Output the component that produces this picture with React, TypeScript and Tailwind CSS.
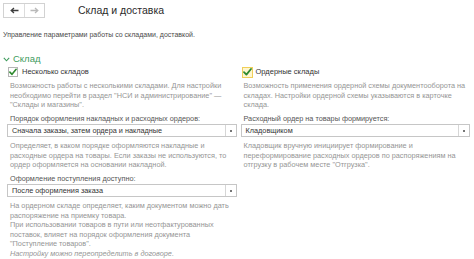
import React from "react";

const Check = () => (
  <svg width="9" height="8" viewBox="0 0 9 8">
    <path d="M1 4.2 L3.4 6.6 L8 1" fill="none" stroke="#2f8a2f" strokeWidth="1.8" strokeLinecap="round" strokeLinejoin="round" />
  </svg>
);

const Select = ({ value }: { value: string }) => (
  <div className="flex h-[13px] items-stretch border border-[#c6c6c6] bg-white">
    <div className="flex flex-1 items-center pl-[4px] text-[7.3px] text-[#333]">{value}</div>
    <div className="flex w-[11px] items-center justify-center border-l border-[#d6d6d6]">
      <div className="h-[2px] w-[2px] bg-[#777]" />
    </div>
  </div>
);

export default function App() {
  return (
    <div className="h-[259px] w-[474px] overflow-hidden bg-white font-['Liberation_Sans',Arial,sans-serif] leading-[9.5px] antialiased">
      <div className="flex items-center pl-[3px] pt-[3px]">
        <div className="flex h-[15px] w-[42px] border border-[#d2d2d2] bg-white">
          <div className="flex w-[21px] items-center justify-center border-r border-[#dcdcdc]">
            <svg width="9" height="7" viewBox="0 0 9 7"><path d="M8.5 3.5 H1.5 M4 1 L1.2 3.5 L4 6" fill="none" stroke="#3c3c3c" strokeWidth="1.3" /></svg>
          </div>
          <div className="flex flex-1 items-center justify-center">
            <svg width="9" height="7" viewBox="0 0 9 7"><path d="M0.5 3.5 H7.5 M5 1 L7.8 3.5 L5 6" fill="none" stroke="#b9b9b9" strokeWidth="1.3" /></svg>
          </div>
        </div>
        <div className="ml-[33px] text-[10.5px] leading-[15px] text-[#2b2b2b]">Склад и доставка</div>
      </div>

      <div className="mt-[12px] pl-[3px] text-[7px] leading-[9px] text-[#4a4a4a]">
        Управление параметрами работы со складами, доставкой.
      </div>

      <div className="mt-[14px] flex items-center pl-[3px] text-[9.5px] leading-[12px] text-[#3e9b5c]">
        <svg width="7" height="5" viewBox="0 0 7 5" className="mr-[3px]"><path d="M0.8 0.8 L3.5 3.8 L6.2 0.8" fill="none" stroke="#3e9b5c" strokeWidth="1.1" /></svg>
        Склад
      </div>

      <div className="mt-[1px] flex gap-[4px] pl-[7px] pr-[4px]">
        {/* left column */}
        <div className="flex w-[230px] flex-col">
          <div className="flex h-[12px] items-center pl-[1px]">
            <div className="flex h-[10px] w-[10px] items-center justify-center border border-[#b5b5b5] bg-white">
              <Check />
            </div>
            <div className="ml-[4px] text-[7.5px] text-[#333]">Несколько складов</div>
          </div>
          <div className="mt-[3px] pl-[3px] text-[7.3px] text-[#959595]">
            Возможность работы с несколькими складами. Для настройки
            <br />
            необходимо перейти в раздел "НСИ и администрирование" —
            <br />
            "Склады и магазины".
          </div>
          <div className="mt-[4px] pl-[3px] text-[7.3px] text-[#555]">
            Порядок оформления накладных и расходных ордеров:
          </div>
          <div className="mt-[1px]">
            <Select value="Сначала заказы, затем ордера и накладные" />
          </div>
          <div className="mt-[4px] pl-[3px] text-[7.3px] text-[#959595]">
            Определяет, в каком порядке оформляются накладные и
            <br />
            расходные ордера на товары. Если заказы не используются, то
            <br />
            ордер оформляется на основании накладной.
          </div>
          <div className="mt-[4px] pl-[3px] text-[7.3px] text-[#555]">
            Оформление поступления доступно:
          </div>
          <div className="mt-[1px]">
            <Select value="После оформления заказа" />
          </div>
          <div className="mt-[4px] pl-[3px] text-[7.3px] text-[#959595]">
            На ордерном складе определяет, каким документом можно дать
            <br />
            распоряжение на приемку товара.
            <br />
            При использовании товаров в пути или неотфактурованных
            <br />
            поставок, влияет на порядок оформления документа
            <br />
            "Поступление товаров".
            <br />
            <i>Настройку можно переопределить в договоре.</i>
          </div>
        </div>

        {/* right column */}
        <div className="flex w-[230px] flex-col">
          <div className="flex h-[12px] items-center pl-[1px]">
            <div className="flex h-[11px] w-[11px] items-center justify-center border border-[#f0cf5a] bg-[#fff6cf]">
              <Check />
            </div>
            <div className="ml-[3px] text-[7.5px] text-[#333]">Ордерные склады</div>
          </div>
          <div className="mt-[3px] pl-[3px] text-[7.3px] text-[#959595]">
            Возможность применения ордерной схемы документооборота на
            <br />
            складах. Настройки ордерной схемы указываются в карточке
            <br />
            склада.
          </div>
          <div className="mt-[4px] pl-[3px] text-[7.3px] text-[#555]">
            Расходный ордер на товары формируется:
          </div>
          <div className="mt-[1px]">
            <Select value="Кладовщиком" />
          </div>
          <div className="mt-[4px] pl-[3px] text-[7.3px] text-[#959595]">
            Кладовщик вручную инициирует формирование и
            <br />
            переформирование расходных ордеров по распоряжениям на
            <br />
            отгрузку в рабочем месте "Отгрузка".
          </div>
        </div>
      </div>
    </div>
  );
}
